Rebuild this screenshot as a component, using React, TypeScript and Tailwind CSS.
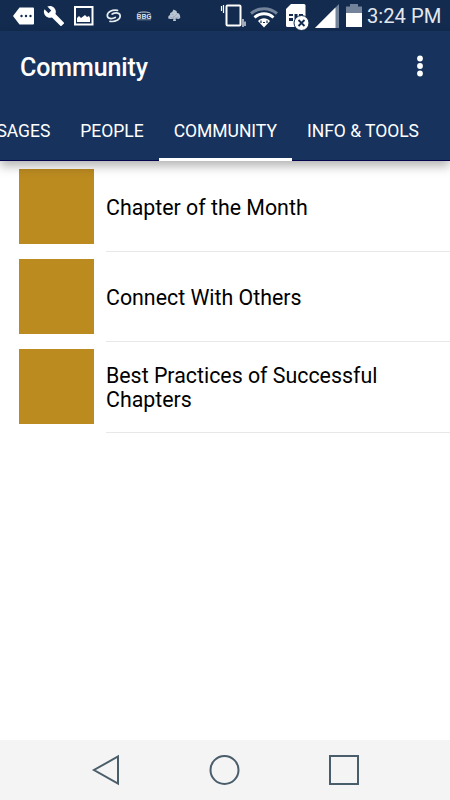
import React from 'react';

interface ListItem {
  id: string;
  title: string;
}

const TABS = [
  { label: 'MESSAGES', active: false },
  { label: 'PEOPLE', active: false },
  { label: 'COMMUNITY', active: true },
  { label: 'INFO & TOOLS', active: false },
];

const ITEMS: ListItem[] = [
  { id: 'chapter', title: 'Chapter of the Month' },
  { id: 'connect', title: 'Connect With Others' },
  { id: 'practices', title: 'Best Practices of Successful Chapters' },
];

const StatusBar: React.FC = () => (
  <div className="flex h-[31px] items-center justify-between bg-[#122b4f] pl-[13px] pr-[9px] text-white">
    {/* Notifications */}
    <div className="flex items-center">
      <svg className="h-[31px] w-[22px]" viewBox="0 0 22 31" fill="currentColor">
        <path d="M6.500 7.500H20a1 1 0 0 1 1 1v15a1 1 0 0 1-1 1H6.500L0 16z" />
        <g fill="#122b4f">
          <circle cx="8.500" cy="16" r="1.200" />
          <circle cx="13" cy="16" r="1.200" />
          <circle cx="17.500" cy="16" r="1.200" />
        </g>
      </svg>
      <svg className="ml-2 size-[22px]" viewBox="0 0 24 24" fill="currentColor">
        <path d="M22.7 19l-9.1-9.1c.9-2.3.4-5-1.5-6.9-2-2-5-2.4-7.4-1.3L9 6 6 9 1.600 4.700C.4 7.100.9 10.100 2.900 12.100c1.900 1.900 4.600 2.400 6.900 1.500l9.100 9.100c.4.4 1 .4 1.400 0l2.300-2.300c.5-.4.5-1.100.1-1.400z" />
      </svg>
      <svg className="ml-2 h-[31px] w-[21px]" viewBox="0 0 21 31" fill="none">
        <rect x="2" y="7" width="17.500" height="17.500" stroke="currentColor" strokeWidth="2" />
        <path d="M4 22v-4l2-2 2 2 4-3 2 2 2-1 1 2v4z" fill="currentColor" />
      </svg>
      <svg className="ml-3 h-[31px] w-4" viewBox="0 0 16 31" fill="none" stroke="#e6ebf0" strokeWidth="1.700" strokeLinecap="round">
        <path d="M11.500 10.300C6 9.300 1.300 12 1.300 15.500c0 3 4 4 8 2" />
        <path d="M4 21.300C9.500 22.300 14.200 19.500 14.200 16c0-3-4-4-8-2" />
      </svg>
      <svg className="ml-3.5 h-[31px] w-4" viewBox="0 0 16 31" fill="none">
        <path d="M1.500 13.500c1-2 12-2 13 0" stroke="#c3ccd8" strokeWidth="1" />
        <path d="M1 19.800h14" stroke="#8494a9" strokeWidth=".8" />
        <text x="0.500" y="19.200" fontSize="7" fontWeight="bold" fontFamily="Roboto, sans-serif" fill="#d5dce5" textLength="15" lengthAdjust="spacingAndGlyphs">BBG</text>
      </svg>
      <svg className="ml-[15px] h-[31px] w-[14px]" viewBox="0 0 14 31" fill="#b9c5d2">
        <path d="M6.500 9.500l3 1.500.5 2 2 .5 1 2 .3 2.500-2 1-2-.5-.8.3.5 2.200h-3l.5-2.300-3 .3-2.300-.6.3-2.400 1.500-1 .2-2 2-1z" />
        <path d="M7 20l-.5-4M7 17l3-3M6.500 15l-2-1M3 17l3 1M8 18l4-1" stroke="#8b9bae" strokeWidth=".6" />
      </svg>
    </div>

    {/* System icons and clock */}
    <div className="flex items-center">
      <svg className="h-[31px] w-[27px]" viewBox="220 0 27 31" fill="none" stroke="currentColor">
        <rect x="226.500" y="5.500" width="14" height="20" rx="1" strokeWidth="2" />
        <path d="M221.500 6v5M223.500 5v8M243 19v8M245 21.500v4.500" strokeWidth="1.200" />
      </svg>
      <svg className="ml-[3px] h-[31px] w-7" viewBox="250 0 28 31" fill="none">
        <path d="M251 13.500c7.500-6.500 18.500-6.500 26 0" stroke="#72839a" strokeWidth="3" />
        <path d="M254.500 17.500c5.500-5 13.500-5 19 0" stroke="currentColor" strokeWidth="2.800" />
        <path d="M258 21c3.500-3.700 8.500-3.700 12 0l-6 6.500z" fill="currentColor" />
        <path d="M261 20.500v2.500M267 20.500v2.500M263 22.500h2" stroke="#122b4f" strokeWidth="1.200" />
      </svg>
      <svg className="ml-[7px] h-[31px] w-[25px]" viewBox="285 0 25 31" fill="none">
        <path d="M291 4h13a1.500 1.500 0 0 1 1.500 1.500V27h-18a1.500 1.500 0 0 1-1.500-1.500V9z" fill="currentColor" />
        <path d="M289 14h4v2h-4zM294.500 14h3v5h-3zM299 14h4v2h-4zM289 18h4v3h-4zM299 18h2v2h-2z" fill="#122b4f" />
        <circle cx="301.500" cy="23" r="7.500" fill="currentColor" stroke="#122b4f" />
        <path d="M298.500 20l6 6M304.500 20l-6 6" stroke="#122b4f" strokeWidth="1.800" />
      </svg>
      <svg className="ml-[5px] h-[31px] w-6" viewBox="315 0 24 31">
        <path d="M315 28l24-24v24z" fill="#72839a" />
        <path d="M315 28l20.500-20.500V28z" fill="currentColor" />
      </svg>
      <svg className="ml-[7px] h-[31px] w-4" viewBox="346 0 16 31">
        <path d="M346 13V6.500h4V4h8v2.500h4V13z" fill="#72839a" />
        <path d="M346 13h16v14h-16z" fill="currentColor" />
      </svg>
      <span className="ml-[5px] w-[74px] whitespace-nowrap pt-[2px] text-[20.2px] leading-[29px] text-[#e4e8ee]">3:24 PM</span>
    </div>
  </div>
);

const AppBar: React.FC = () => (
  <header className="relative z-10 bg-[#17335d] text-white shadow-[0_5px_10px_rgba(0,0,0,0.3)]">
    <div className="flex h-[73px] items-center justify-between pl-5 pr-[26px]">
      <h1 className="text-[25px] font-medium leading-none tracking-[-0.1px]">Community</h1>
      <svg className="h-6 w-2 shrink-0 -translate-y-0.5" viewBox="0 0 8 24" fill="currentColor">
        <circle cx="4" cy="4.500" r="2.900" />
        <circle cx="4" cy="12" r="2.900" />
        <circle cx="4" cy="19.500" r="2.900" />
      </svg>
    </div>
    <nav className="flex h-[57px] justify-end overflow-hidden border-b border-[#060650] pr-4">
      {TABS.map((tab) => (
        <div
          key={tab.label}
          className={`-mb-px flex h-[57px] shrink-0 items-center border-b-[3px] px-[15px] pt-[1px] text-[17.5px] leading-none tracking-[-0.018px] whitespace-nowrap ${
            tab.active ? 'border-white' : 'border-transparent'
          }`}
        >
          {tab.label}
        </div>
      ))}
    </nav>
    {/* Border of the active tab runs down to the edge of the bar */}
    <div className="absolute bottom-0 left-[159px] h-px w-[133px] bg-white" />
  </header>
);

const NavigationBar: React.FC = () => (
  <footer className="flex h-[60px] items-center justify-between bg-[#f4f4f4] pl-[91px] pr-[90px] text-[#4a5d6a]">
    <svg className="h-8 w-[30px]" viewBox="0 0 30 32" fill="none" stroke="currentColor" strokeWidth="2">
      <path d="M27 2.500v27L3 16z" />
    </svg>
    <svg className="size-8" viewBox="0 0 32 32" fill="none" stroke="currentColor" strokeWidth="2">
      <circle cx="15.500" cy="16" r="14" />
    </svg>
    <svg className="size-8" viewBox="0 0 32 32" fill="none" stroke="currentColor" strokeWidth="2">
      <rect x="2" y="2" width="28" height="28" />
    </svg>
  </footer>
);

export default function App() {
  return (
    <div className="flex h-screen w-full flex-col overflow-hidden bg-white font-['Roboto',sans-serif]">
      <StatusBar />
      <AppBar />
      <main className="flex-1">
        {ITEMS.map((item) => (
          <div key={item.id} className="flex h-[90.4px] pl-[19px]">
            <div className="mt-[7.6px] size-[75px] shrink-0 bg-[#bb8b20]" />
            <div className="-mb-[0.7px] ml-3 flex flex-1 items-center border-b border-[#e8e8e8] pr-10 pt-[3.1px]">
              <span className="text-[21.35px] leading-[24px] text-black">{item.title}</span>
            </div>
          </div>
        ))}
      </main>
      <NavigationBar />
    </div>
  );
}
